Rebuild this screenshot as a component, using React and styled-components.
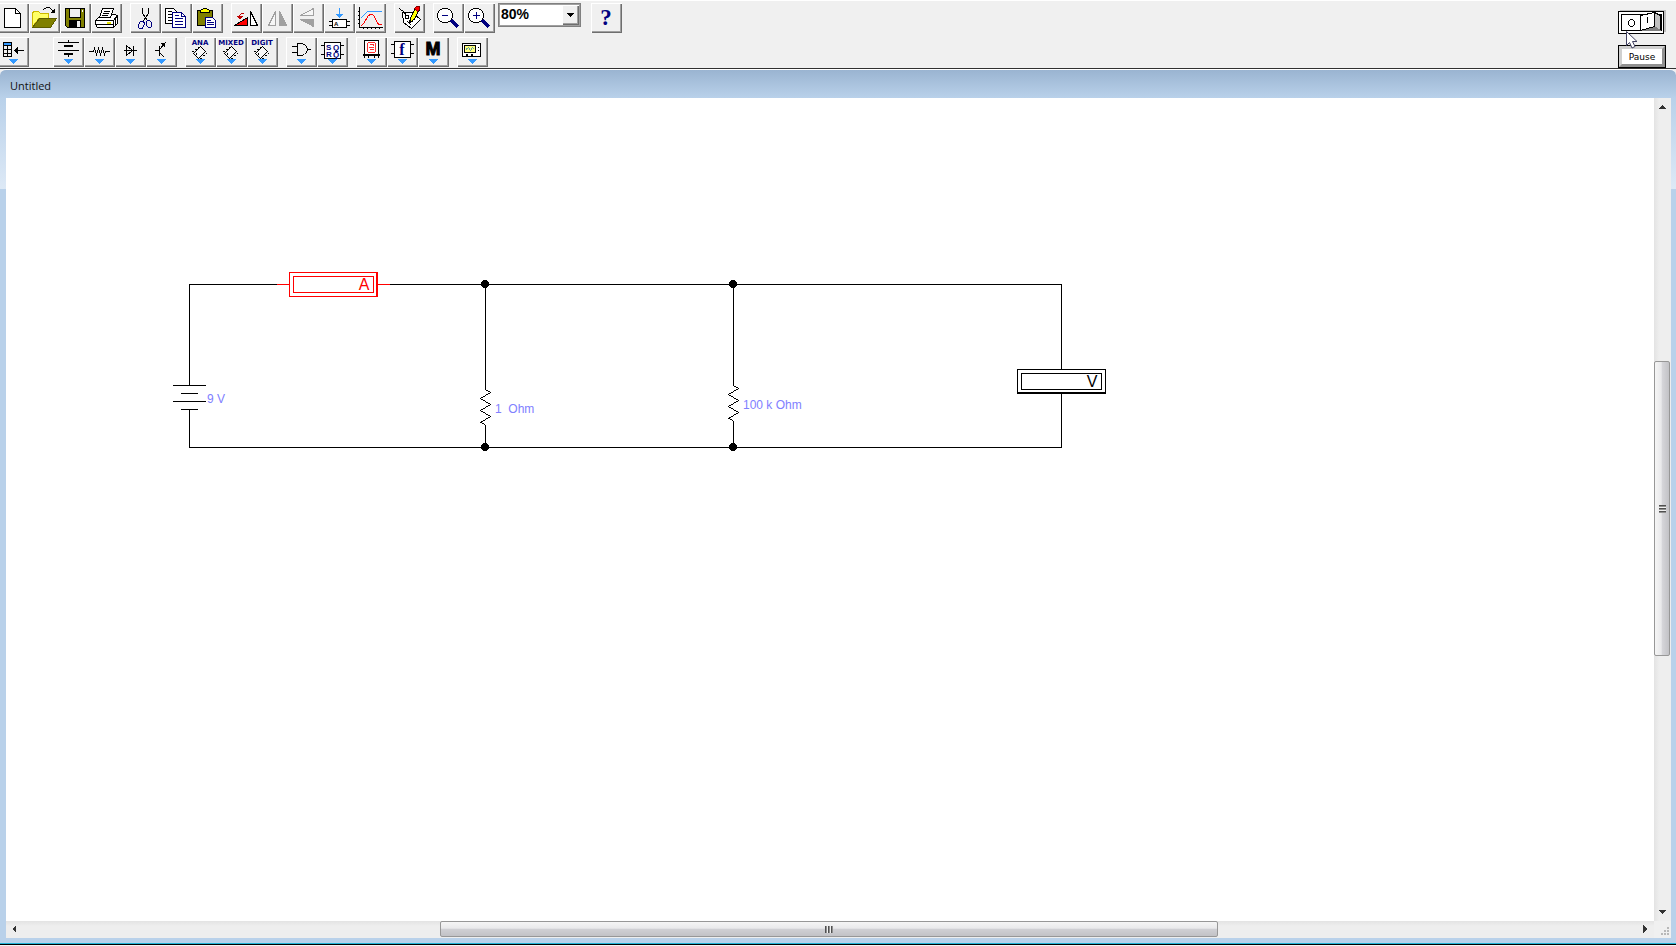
import React, { useState } from 'react';
import styled, { createGlobalStyle, css } from 'styled-components';

const NAVY = '#000080';
const OLIVE = '#808000';

const icons = {
  newFile: (
    <>
      <path d="M6.5 5.5H17.5L22.5 10.5V24.5H6.5Z" fill="#fff" stroke="#000" />
      <path d="M17.5 5.5V10.5H22.5" fill="none" stroke="#000" />
    </>
  ),
  open: (
    <>
      <path d="M3.5 24V9.5L5.5 8.5H9.5L11.5 10.5H19.5V15H10Z" fill="#ffff66" stroke="#ccb800" />
      <path d="M3.5 24.5L10.5 15.5H27.5L21.5 24.5Z" fill={OLIVE} stroke="#5c5c00" />
      <path d="M14.5 6.5L17.5 4.5H20.5L24.5 8.5" fill="none" stroke="#000" />
      <path d="M26 5V10H21Z" fill="#000" />
    </>
  ),
  save: (
    <>
      <path d="M5.5 5.5H24.5V24.5H7.5L5.5 22.5Z" fill={OLIVE} stroke="#000" />
      <path d="M9.5 5.5H20.5V14.5H9.5Z" fill="#efefef" stroke="#000" />
      <path d="M9 17H21V25H9Z" fill="#000" />
      <path d="M17 18H20V24H17Z" fill="#efefef" />
      <path d="M22 7H23V9H22Z" fill="#fff" />
    </>
  ),
  print: (
    <>
      <path d="M8.5 13.5L4.5 17.5V21.5L6.5 24.5H22.5L26.5 20.5V12.5L23.5 11.5Z" fill="#fff" stroke="#000" />
      <path d="M4.5 17.5H22.5L26.5 12.5M22.5 17.5V24.5M5 21.5H22M24.5 15V22" fill="none" stroke="#000" />
      <path d="M8.5 14.5L11.5 5.5H22.5L19.5 14.5Z" fill="#fff" stroke="#000" />
      <path d="M13 8.5H19M12 10.5H18M11 12.5H17" stroke="#000" />
      <path d="M16 19H20V21H16Z" fill="#e6e600" />
    </>
  ),
  cut: (
    <>
      <path d="M12.5 5V10L17.5 18M18.5 5V10L13.5 18" fill="none" stroke="#000" />
      <path d="M10.5 18.5H13.5L14.5 20.5L12.5 25.5H9.5L8.5 24.5V21.5Z" fill="none" stroke={NAVY} />
      <path d="M17.5 17.5H19.5L21.5 19.5V23.5L20.5 24.5H18.5L16.5 22.5V18.5Z" fill="none" stroke={NAVY} />
    </>
  ),
  copy: (
    <>
      <path d="M4.5 5.5H12.5L15.5 8.5V20.5H4.5Z" fill="#fff" stroke="#000" />
      <path d="M7 8.5H11M7 11.5H11M7 14.5H11M7 17.5H11" stroke="#000" />
      <path d="M11.5 9.5H20.5L24.5 13.5V24.5H11.5Z" fill="#fff" stroke={NAVY} />
      <path d="M20.5 9.5V13.5H24.5M14 12.5H18M14 15.5H22M14 18.5H22M14 21.5H22" fill="none" stroke={NAVY} />
    </>
  ),
  paste: (
    <>
      <path d="M5.5 7.5H20.5V22.5H5.5Z" fill={OLIVE} stroke="#000" />
      <path d="M8.5 9.5V7.5L11.5 5.5H14.5L17.5 7.5V9.5Z" fill="#ffff00" stroke="#000" />
      <path d="M13.5 14.5H20.5L23.5 17.5V24.5H13.5Z" fill="#fff" stroke={NAVY} />
      <path d="M15 17.5H19M15 19.5H22M15 21.5H22" stroke={NAVY} />
    </>
  ),
  rotate: (
    <>
      <path d="M3.5 22.5L16.5 14.5V22.5Z" fill="#f00" stroke="#000" />
      <path d="M19.5 22.5V8.5L26.5 22.5Z" fill="#fff" stroke="#000" />
      <path d="M12.5 10.5H10.5L8.5 12.5V14" fill="none" stroke="#c00000" />
      <path d="M6 13H12L9 17Z" fill="#c00000" />
    </>
  ),
  flipH: (
    <>
      <path d="M6.5 22.5L13.5 8.5V22.5Z" fill="#f6f6f6" stroke="#a0a0a0" />
      <path d="M17.5 22.5V8.5L24.5 22.5Z" fill="#a0a0a0" stroke="#a0a0a0" />
    </>
  ),
  flipV: (
    <>
      <path d="M7.5 12.5L20.5 5.5V12.5Z" fill="#f6f6f6" stroke="#a0a0a0" />
      <path d="M7.5 16.5L20.5 23.5V16.5Z" fill="#a0a0a0" stroke="#a0a0a0" />
    </>
  ),
  subcircuit: (
    <>
      <path d="M15.5 5V13" stroke="#3399ff" />
      <path d="M12 11H19L15.5 15Z" fill="#3399ff" />
      <path d="M8.5 16.5H22.5V24.5H8.5Z" fill="#fff" stroke="#000" />
      <path d="M5 18.5H8M5 22.5H8M23 18.5H26M23 22.5H26" stroke="#000" />
      <text x="10" y="23" fontSize="6" fontWeight="700">A</text>
    </>
  ),
  graph: (
    <>
      <path d="M4.5 4V25M4 24.5H28" stroke="#000" />
      <path d="M3 8.5H4M3 12.5H4M3 16.5H4M3 20.5H4M8.5 25V26M12.5 25V26M16.5 25V26M20.5 25V26M24.5 25V26" stroke="#000" />
      <path d="M5.5 15.5L12.5 8.5H27" fill="none" stroke="#3399ff" />
      <path d="M5.5 23.5L8.5 20.5L13.5 12.5L15.5 11.5H17.5L19.5 13.5L22.5 20.5L24.5 21.5H27" fill="none" stroke="#f00" />
    </>
  ),
  tag: (
    <>
      <path d="M8.5 9.5H18.5L26.5 16.5L17.5 25.5L9.5 19.5Z" fill="#fff" stroke="#000" />
      <path d="M5 5.5L9.5 8.5L12.5 12.5M10.5 12.5H14.5V15.5H11.5V13M13.5 18.5L17.5 22.5" fill="none" stroke="#000" />
      <path d="M19.5 8.5L22.5 4.5L25.5 6.5L19.5 17.5L15.5 19.5L16.5 15.5Z" fill="#ffff00" stroke="#000" />
      <path d="M20.5 5.5L22.5 3.5H25.5V6.5L23.5 8.5Z" fill="#f00" stroke="#800000" />
      <path d="M15 18H17V20H15Z" fill="#000" />
    </>
  ),
  zoomOut: (
    <>
      <path d="M18 17L25 24" stroke={NAVY} strokeWidth="3" />
      <path d="M9.5 5.5H14.5L17.5 7.5L19.5 10.5V14.5L17.5 17.5L14.5 19.5H9.5L6.5 17.5L4.5 14.5V10.5L6.5 7.5Z" fill="#fff" stroke="#000" />
      <path d="M9 12.5H15" stroke={NAVY} />
    </>
  ),
  zoomIn: (
    <>
      <path d="M18 17L25 24" stroke={NAVY} strokeWidth="3" />
      <path d="M9.5 5.5H14.5L17.5 7.5L19.5 10.5V14.5L17.5 17.5L14.5 19.5H9.5L6.5 17.5L4.5 14.5V10.5L6.5 7.5Z" fill="#fff" stroke="#000" />
      <path d="M9 12.5H16M12.5 9V16" stroke={NAVY} />
    </>
  ),
  help: (
    <text x="15" y="22" textAnchor="middle" fontFamily="Liberation Serif, serif" fontSize="23" fontWeight="700" fill={NAVY}>?</text>
  ),
  partsBin: (
    <>
      <path d="M5 5H14V8H5Z" fill="#3399ff" />
      <path d="M5.5 5.5H13.5V19.5H5.5ZM5 8.5H14M5 12.5H14M5 16.5H14M9.5 8V20" fill="none" stroke="#000" />
      <path d="M18 13.5H26" stroke="#000" />
      <path d="M16 13.5L20 10V17Z" fill="#000" />
    </>
  ),
  sources: (
    <>
      <path d="M15.5 3V5M5 5.5H26M5 13.5H26M15.5 17V20" stroke="#000" />
      <path d="M11 9H20M11 17H20" stroke="#000" strokeWidth="2" />
    </>
  ),
  basic: (
    <path d="M5 14.5H9.5L10.5 11.5L12.5 17.5L14.5 11.5L16.5 17.5L18.5 11.5L20.5 17.5L21.5 14.5H26" fill="none" stroke="#000" />
  ),
  diodes: (
    <>
      <path d="M11.5 8.5V18.5L17.5 13.5Z" fill="#efefef" stroke="#000" />
      <path d="M9 13.5H22M18.5 9V19" stroke="#000" />
    </>
  ),
  transistors: (
    <>
      <path d="M9 13.5H13M13.5 9V19M13.5 12.5L19.5 5.5M13.5 15.5L18.5 20.5" fill="none" stroke="#000" />
      <path d="M15 6H19V11L17 9Z" fill="#000" />
    </>
  ),
  flipFlop: (
    <>
      <path d="M7.5 5.5H23.5V21.5H7.5Z" fill="#fff" stroke="#000" />
      <path d="M4 8.5H7M4 17.5H7M24 8.5H27M24 17.5H27M18 14.5H21" stroke="#000" />
      <g fontSize="8" fontWeight="700" fill={NAVY}>
        <text x="9" y="13">S</text>
        <text x="16" y="13">Q</text>
        <text x="9" y="20">R</text>
        <text x="16" y="20">Q</text>
      </g>
    </>
  ),
  gate: (
    <path d="M11.5 6.5H15.5L18.5 7.5L20.5 9.5L21.5 12.5L20.5 15.5L18.5 17.5L15.5 18.5H11.5ZM6 9.5H11M6 15.5H11M22 12.5H25" fill="none" stroke="#000" />
  ),
  indicator: (
    <>
      <path d="M8.5 3.5H22.5V17.5H8.5Z" fill="#fff" stroke="#000" />
      <path d="M12.5 5.5H18.5L19.5 6.5V14.5L18.5 15.5H12.5L11.5 14.5V6.5ZM14 7.5H17.5V9M14 12.5H17.5M13 10.5H18" fill="none" stroke="#ff3030" />
      <path d="M7 17H24V19H7Z" fill="#000" />
      <path d="M8.5 19V21M12.5 19V21M18.5 19V21M22.5 19V21" stroke="#000" />
    </>
  ),
  controls: (
    <>
      <path d="M7.5 4.5H23.5V20.5H7.5Z" fill="#fff" stroke="#000" />
      <path d="M4 7.5H7M4 16.5H7M24 7.5H27M24 16.5H27" stroke="#000" />
      <text x="15" y="18" textAnchor="middle" fontFamily="Liberation Serif, serif" fontSize="16" fontWeight="700" fill={NAVY}>f</text>
    </>
  ),
  misc: (
    <text x="15" y="18" textAnchor="middle" fontSize="18" fontWeight="700" stroke="#000">M</text>
  ),
  instruments: (
    <>
      <path d="M5.5 6.5H23.5V19.5H5.5Z" fill="#fff" stroke="#000" />
      <path d="M7.5 8.5H18.5V15.5H7.5Z" fill="#ffff80" stroke="#000" />
      <path d="M9 12.5L11.5 10.5L13.5 13.5L15.5 10.5L17.5 12.5" fill="none" stroke="#5f9f9f" />
      <path d="M21 10H22V11H21ZM21 13H22V14H21ZM9 17H11V19H9ZM14 17H16V19H14Z" fill="#000" />
    </>
  ),
};

const chip = (
  <>
    <path d="M15.5 9.5L20.5 14.5L13.5 21.5L8.5 16.5Z" fill="#f8f8f8" stroke="#000" />
    <path d="M13 10H14V11H13ZM10 12H12V13H10ZM7 14H9V15H7ZM21 16H22V17H21ZM18 18H20V19H18ZM15 21H17V22H15ZM11 16H12V18H11Z" fill="#000" />
  </>
);

['ANA', 'MIXED', 'DIGIT'].forEach((name) => {
  icons[name] = (
    <>
      <text x="15" y="8" textAnchor="middle" fontFamily="DejaVu Sans, sans-serif" fontSize="7" fontWeight="700" fill={NAVY}>{name}</text>
      {chip}
    </>
  );
});

const mainGroups = [
  [['newFile', 'New'], ['open', 'Open'], ['save', 'Save'], ['print', 'Print']],
  [['cut', 'Cut'], ['copy', 'Copy'], ['paste', 'Paste']],
  [['rotate', 'Rotate'], ['flipH', 'Flip horizontal'], ['flipV', 'Flip vertical'], ['subcircuit', 'Create subcircuit'], ['graph', 'Display graphs']],
  [['tag', 'Component properties']],
  [['zoomOut', 'Zoom out'], ['zoomIn', 'Zoom in']],
];

const partGroups = [
  [['sources', 'Sources'], ['basic', 'Basic'], ['diodes', 'Diodes'], ['transistors', 'Transistors']],
  [['ANA', 'Analog ICs'], ['MIXED', 'Mixed ICs'], ['DIGIT', 'Digital ICs']],
  [['gate', 'Logic gates'], ['flipFlop', 'Digital']],
  [['indicator', 'Indicators'], ['controls', 'Controls'], ['misc', 'Miscellaneous']],
  [['instruments', 'Instruments']],
];

const Tool = ({ icon, label, menu, disabled }) => (
  <ToolButton type="button" aria-label={label} disabled={disabled}>
    <ToolIcon aria-hidden="true">
      {icons[icon]}
      {menu && <path d="M11 22H20L15.5 27Z" fill="#3399ff" />}
    </ToolIcon>
  </ToolButton>
);

const ToolGroup = ({ tools, menu }) => (
  <Group>
    {tools.map(([icon, label]) => (
      <Tool key={icon} icon={icon} label={label} menu={menu} disabled={icon === 'flipH' || icon === 'flipV'} />
    ))}
  </Group>
);

const Meter = ({ x, y, color, unit, edge }) => (
  <g transform={`translate(${x} ${y})`} fill="none" stroke={color}>
    <rect x="0.5" y="0.5" width="88" height="24" fill="#fff" />
    <rect x="4.5" y="4.5" width="80" height="16" />
    <path d={edge === 'right' ? 'M87.5 0V25' : 'M0 23.5H89'} />
    <text x="75" y="18" textAnchor="middle" fontSize="16" fill={color} stroke="none">{unit}</text>
  </g>
);

const Resistor = ({ x, y, value }) => (
  <g transform={`translate(${x} ${y})`}>
    <path d="M0.5 0.5L5.5 3.5L-4.5 9.5L5.5 15.5L-4.5 21.5L5.5 27.5L-4.5 33.5L0.5 35.5" fill="none" stroke="#000" />
    <text x="10" y="24" fontSize="12" fill="#8080ff">{value}</text>
  </g>
);

const Circuit = () => (
  <Schematic role="img" aria-label="Circuit diagram">
    <path
      d="M183.5 287V186.5H271M384 186.5H1055.5V349.5H183.5V312M479.5 186V291M479.5 327V349M727.5 186V287M727.5 323V349"
      fill="none"
      stroke="#000"
    />
    <path d="M167 287.5H200M175 295.5H192M167 303.5H200M175 311.5H192" stroke="#000" />
    <text x="201" y="305" fontSize="12" fill="#8080ff">9 V</text>
    <path d="M271 186.5H283M372 186.5H384" stroke="#f00" />
    <Meter x={283} y={174} color="#f00" unit="A" edge="right" />
    <Resistor x={479} y={291} value={'1\u00a0 Ohm'} />
    <Resistor x={727} y={287} value="100 k Ohm" />
    <Meter x={1011} y={271} color="#000" unit="V" edge="bottom" />
    {[[479, 186], [727, 186], [479, 349], [727, 349]].map(([cx, cy]) => (
      <circle key={`${cx}-${cy}`} cx={cx} cy={cy} r="4" />
    ))}
  </Schematic>
);

const arrows = {
  up: 'M5 11L8.5 7L12 11Z',
  down: 'M5 6H12L8.5 10Z',
  left: 'M10 4V12L6 8Z',
  right: 'M6 4V12L10 8Z',
};

const ScrollBar = ({ vertical, before, size, after }) => (
  <ScrollTrack $vertical={vertical}>
    <ScrollButton type="button" aria-label={vertical ? 'Scroll up' : 'Scroll left'}>
      <SmallIcon aria-hidden="true"><path d={vertical ? arrows.up : arrows.left} fill="#333" /></SmallIcon>
    </ScrollButton>
    <ScrollGap $weight={before} />
    <ScrollThumb $weight={size} $vertical={vertical}>
      <Grip $vertical={vertical} />
    </ScrollThumb>
    <ScrollGap $weight={after} />
    <ScrollButton type="button" aria-label={vertical ? 'Scroll down' : 'Scroll right'}>
      <SmallIcon aria-hidden="true"><path d={vertical ? arrows.down : arrows.right} fill="#333" /></SmallIcon>
    </ScrollButton>
  </ScrollTrack>
);

const App = () => {
  const [zoom, setZoom] = useState('80%');

  return (
    <Page>
      <GlobalStyle />
      <Header>
        <Toolbars>
          <Toolbar>
            {mainGroups.map((tools) => <ToolGroup key={tools[0][0]} tools={tools} />)}
            <ZoomBox>
              <ZoomSelect aria-label="Zoom" value={zoom} onChange={(e) => setZoom(e.target.value)}>
                <option>50%</option>
                <option>80%</option>
                <option>100%</option>
                <option>150%</option>
              </ZoomSelect>
              <ZoomArrow aria-hidden="true"><path d="M5 8H12L8.5 12Z" fill="#000" /></ZoomArrow>
            </ZoomBox>
            <Tool icon="help" label="Help" />
          </Toolbar>
          <Toolbar>
            <PartsBin><Tool icon="partsBin" label="Parts bin" menu /></PartsBin>
            {partGroups.map((tools) => <ToolGroup key={tools[0][0]} tools={tools} menu />)}
          </Toolbar>
        </Toolbars>
        <Simulation>
          <PowerSwitch type="button" aria-label="Power switch">
            <SwitchIcon aria-hidden="true">
              <path d="M2 0H48V22H2Z" fill="#c0c0c0" />
              <path d="M0.5 1.5H45.5V23.5H0.5Z" fill="#fff" stroke="#000" />
              <path d="M3.5 4.5H43.5V20.5H3.5Z" fill="#fff" stroke="#000" />
              <path d="M36.5 2.5L42.5 5.5V20.5L36.5 16.5Z" fill="#c0c0c0" stroke="#000" />
              <path d="M23.5 20.5L36.5 16.5L42.5 20.5Z" fill="#808080" stroke="#808080" />
              <path d="M22.5 5.5L36.5 2.5V16.5L22.5 20.5Z" fill="#fff" stroke="#000" />
              <path d="M12.5 9.5H14.5L16.5 11.5V14.5L14.5 16.5H12.5L10.5 14.5V11.5ZM29.5 7V13" fill="none" stroke="#000" />
            </SwitchIcon>
          </PowerSwitch>
          <PauseButton type="button">Pause</PauseButton>
          <Pointer aria-hidden="true">
            <path d="M1.5 1.5V15.5L4.5 12.5L7 18L10 16.5L7.5 11.5H12Z" fill="#fff" stroke="#404060" />
          </Pointer>
        </Simulation>
      </Header>
      <DocumentWindow>
        <TitleBar>Untitled</TitleBar>
        <DocumentBody>
          <Canvas><Circuit /></Canvas>
          <ScrollBar vertical before={247} size={293} after={249} />
          <ScrollBar before={418} size={776} after={420} />
          <SizeGrip aria-hidden="true">
            <path d="M13 6H15V8H13ZM10 9H12V11H10ZM13 9H15V11H13ZM7 12H9V14H7ZM10 12H12V14H10ZM13 12H15V14H13Z" fill="#b8b8b8" />
          </SizeGrip>
        </DocumentBody>
      </DocumentWindow>
      <BottomEdge />
    </Page>
  );
};

const GlobalStyle = createGlobalStyle`
  * {
    box-sizing: border-box;
  }
  body {
    margin: 0;
    font-family: "Liberation Sans", Arial, sans-serif;
  }
  button {
    padding: 0;
    border: none;
    color: #000;
  }
  svg {
    display: block;
    shape-rendering: crispEdges;
  }
`;

const Page = styled.div`
  display: flex;
  flex-direction: column;
  height: 100vh;
  background: #f0f0f0;
  overflow: hidden;
`;

const Header = styled.header`
  display: flex;
  justify-content: space-between;
  padding: 2px 10px 0 0;
  border-top: 1px solid #fff;
  border-bottom: 1px solid #303030;
`;

const Toolbars = styled.div`
  display: flex;
  flex-direction: column;
  gap: 4px;
  margin-left: -2px;
  padding-bottom: 1px;
`;

const Toolbar = styled.div`
  display: flex;
  align-items: flex-start;
  gap: 8px;
`;

const Group = styled.div`
  display: flex;
`;

const PartsBin = styled(Group)`
  margin-right: 16px;
`;

const ToolButton = styled.button`
  width: 31px;
  height: 30px;
  background: #f0f0f0;
  box-shadow: inset 1px 1px #fff, inset -1px -1px #6e6e6e, inset -2px -2px #a0a0a0;
`;

const ToolIcon = styled.svg`
  width: 31px;
  height: 30px;
`;

const ZoomBox = styled.div`
  position: relative;
  margin: 0 2px 0 -5px;
`;

const ZoomSelect = styled.select`
  appearance: none;
  display: block;
  width: 83px;
  height: 24px;
  padding: 0 20px 2px 2px;
  border: 1px solid #808080;
  border-radius: 0;
  outline: 1px solid #a0a0a0;
  outline-offset: -2px;
  background: #fff;
  color: #000;
  font: 700 14px "Liberation Sans", Arial, sans-serif;
`;

const ZoomArrow = styled.svg`
  position: absolute;
  top: 2px;
  right: 2px;
  width: 17px;
  height: 20px;
  background: #f0f0f0;
  box-shadow: inset 1px 1px #fff, inset -1px -1px #6e6e6e, inset -2px -2px #a0a0a0;
  pointer-events: none;
`;

const Simulation = styled.div`
  position: relative;
  display: flex;
  flex-direction: column;
  justify-content: space-between;
  padding-top: 7px;
`;

const PowerSwitch = styled.button`
  background: none;
`;

const SwitchIcon = styled.svg`
  width: 48px;
  height: 24px;
`;

const PauseButton = styled.button`
  width: 48px;
  height: 23px;
  border: 4px solid;
  border-color: #d0d0d0 #909090 #909090 #d0d0d0;
  outline: 1px solid #000;
  outline-offset: -1px;
  background: #fff;
  font: 9px/12px "DejaVu Sans", Verdana, sans-serif;
`;

const Pointer = styled.svg`
  position: absolute;
  top: 27px;
  left: 7px;
  width: 13px;
  height: 20px;
  shape-rendering: auto;
`;

const DocumentWindow = styled.main`
  display: flex;
  flex: 1;
  flex-direction: column;
  min-height: 0;
  padding: 0 5px 5px 6px;
  border-top: 1px solid #fff;
  border-radius: 6px 6px 0 0;
  background: linear-gradient(#9ab4d1 0, #b9d1ea 28px, #dde9f6 119px, #b9d1ea 119px);
`;

const TitleBar = styled.div`
  padding: 8px 4px 4px;
  color: #111;
  font: 11px/16px "Open Sans", sans-serif;
`;

const DocumentBody = styled.div`
  display: grid;
  flex: 1;
  grid-template-columns: 1fr 17px;
  grid-template-rows: 1fr 17px;
  min-height: 0;
  background: #f0f0f0;
`;

const Canvas = styled.div`
  min-width: 0;
  background: #fff;
  overflow: hidden;
`;

const Schematic = styled.svg`
  width: 100%;
  height: 100%;
`;

const ScrollTrack = styled.div`
  display: flex;
  flex-direction: ${({ $vertical }) => ($vertical ? 'column' : 'row')};
  background: linear-gradient(${({ $vertical }) => ($vertical ? 'to right' : 'to bottom')}, #e3e3e3, #eee 30%, #eee);
`;

const ScrollButton = styled.button`
  width: 17px;
  height: 17px;
  background: none;
`;

const SmallIcon = styled.svg`
  width: 17px;
  height: 17px;
`;

const ScrollGap = styled.div`
  flex: ${({ $weight }) => $weight} 1 0;
`;

const ScrollThumb = styled.div`
  display: flex;
  flex: ${({ $weight }) => $weight} 1 0;
  align-items: center;
  justify-content: center;
  border: 1px solid #979797;
  border-radius: 2px;
  ${({ $vertical }) => ($vertical
    ? css`
      margin-right: 1px;
      background: linear-gradient(to right, #f5f5f5, #e9e9eb 45%, #d6d6da 50%, #c2c2c6);
    `
    : css`
      margin-bottom: 1px;
      background: linear-gradient(#f5f5f5, #e9e9eb 45%, #d0d0d4 50%, #c2c2c6);
    `)}
`;

const Grip = styled.div`
  width: ${({ $vertical }) => ($vertical ? 7 : 8)}px;
  height: ${({ $vertical }) => ($vertical ? 8 : 7)}px;
  background: repeating-linear-gradient(
    ${({ $vertical }) => ($vertical ? 'to bottom' : 'to right')},
    #505050 0 1px,
    #909090 1px 2px,
    #f0f0f0 2px 3px
  );
`;

const SizeGrip = styled.svg`
  width: 17px;
  height: 17px;
`;

const BottomEdge = styled.footer`
  height: 3px;
  border-top: 1px solid #22b4d6;
  border-bottom: 1px solid #f4f4f4;
  background: #000;
`;

export default App;
